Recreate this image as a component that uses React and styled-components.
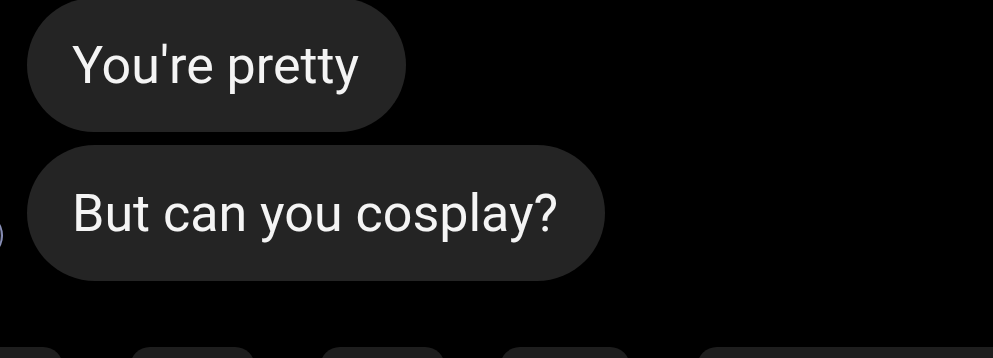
import React from 'react';
import styled, { createGlobalStyle } from 'styled-components';

const GlobalStyle = createGlobalStyle`
  html, body {
    margin: 0;
    padding: 0;
    background: #000;
    overflow: hidden;
  }
`;

const Screen = styled.div`
  position: relative;
  width: 993px;
  height: 358px;
  background: #000;
  overflow: hidden;
  font-family: Roboto, "Noto Sans", sans-serif;
`;

const Thread = styled.div`
  display: flex;
  flex-direction: column;
  align-items: flex-start;
  gap: 13px;
  padding-left: 27px;
  margin-top: -2px;
`;

const Bubble = styled.div`
  display: flex;
  align-items: center;
  box-sizing: border-box;
  height: ${p => p.h}px;
  padding: 0 47px 0 45px;
  border-radius: 70px;
  background: #242424;
  color: #f4f4f4;
  font-size: 52px;
  white-space: nowrap;
`;

const Avatar = styled.div`
  position: absolute;
  left: -44px;
  top: 212px;
  width: 47px;
  height: 47px;
  border-radius: 50%;
  background: #0a0a0a;
  box-shadow: inset -2px 0 1px #8f96c0;
`;

const Chips = styled.div`
  display: flex;
  margin-top: 66px;
`;

const Chip = styled.div`
  flex: none;
  width: ${p => p.w}px;
  margin-left: ${p => p.ml}px;
  height: 40px;
  border-radius: 24px;
  background: #1e1e1e;
`;

const chips = [
  { w: 123, ml: -60 },
  { w: 125, ml: 67 },
  { w: 125, ml: 65 },
  { w: 130, ml: 55 },
  { w: 330, ml: 67 },
];

export default function App() {
  return (
    <Screen>
      <GlobalStyle />
      <Avatar />
      <Thread>
        <Bubble h={134}>You're pretty</Bubble>
        <Bubble h={136}>But can you cosplay?</Bubble>
      </Thread>
      <Chips>
        {chips.map((c, i) => (
          <Chip key={i} w={c.w} ml={c.ml} />
        ))}
      </Chips>
    </Screen>
  );
}
